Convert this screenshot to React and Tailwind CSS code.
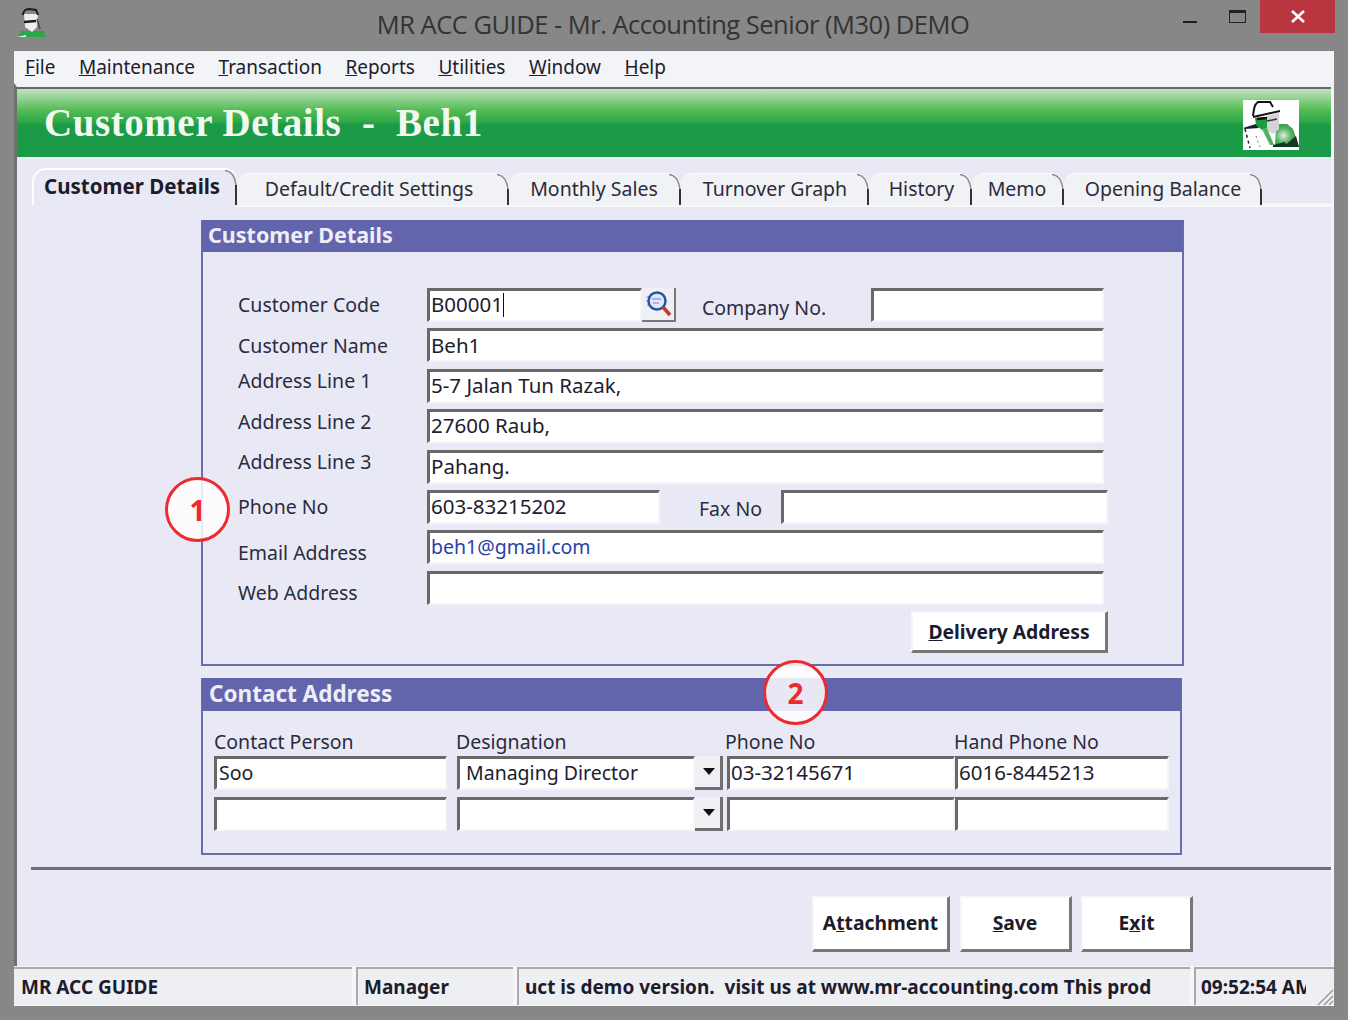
import React from 'react'

const bevel = 'border-t-[3px] border-l-[3px] border-r-2 border-b-2 border-t-[#686868] border-l-[#686868] border-r-[#f6f6fa] border-b-[#f6f6fa] bg-white'
const btn = 'flex items-center justify-center bg-white border-t-2 border-l-2 border-r-[3px] border-b-[3px] border-t-[#f6f6fa] border-l-[#f6f6fa] border-r-[#777] border-b-[#777] font-bold text-[19.3px] text-[#1c1c2c]'

const tabs = [
  { label: 'Default/Credit Settings', w: 'w-[272px]', pr: 'pr-[8px]' },
  { label: 'Monthly Sales', w: 'w-[172px]', pr: 'pr-[2px]' },
  { label: 'Turnover Graph', w: 'w-[188px]', pr: 'pr-0' },
  { label: 'History', w: 'w-[103px]', pr: 'pl-[2px]' },
  { label: 'Memo', w: 'w-[92px]', pr: 'pr-[2px]' },
  { label: 'Opening Balance', w: 'w-[198px]', pr: 'pr-0' },
]

const ManLogo = ({ className }) => (
  <svg viewBox="0 0 56 50" className={className}>
    <defs>
      <radialGradient id="body" cx="0.35" cy="0.5" r="0.7">
        <stop offset="0" stopColor="#e4ece4" />
        <stop offset="0.45" stopColor="#58b564" />
        <stop offset="1" stopColor="#0f7a33" />
      </radialGradient>
    </defs>
    <rect width="56" height="50" fill="#fff" />
    <path d="M33 24 L44 24 L50 29 L56 47 L32 47 Z" fill="url(#body)" />
    <path d="M40 47 L56 47 L53 36 L47 41 Z" fill="#143a22" />
    <path d="M23 16 L36 13 L36 29 L30 34 L24 30 Z" fill="#d4d4d4" />
    <path d="M0 28 L13 24 L16 28 L2 29 Z" fill="#123" />
    <path d="M12 18 L24 17 L24 28 L19 30 L13 25 Z" fill="#1f9a3e" />
    <path d="M19 29 L24 28 L31 45 L27 45 Z" fill="#4fb45e" />
    <path d="M10 16 C11 9 11 5 15 2 L27 2 L30 7" fill="none" stroke="#111" strokeWidth="2" />
    <path d="M10 17 L37 11" stroke="#111" strokeWidth="2" />
    <path d="M14 19 L24 18" stroke="#111" strokeWidth="2.5" />
    <path d="M24 21 L34 19" stroke="#333" strokeWidth="1.5" />
    <path d="M2 29 L7 48" stroke="#222" strokeWidth="1.5" strokeDasharray="3 3" fill="none" />
    <path d="M13 36 L17 47" stroke="#777" strokeWidth="1" strokeDasharray="2 3" fill="none" />
    <path d="M30 45 L42 42 L44 47 L30 47 Z" fill="#0c3a1c" />
  </svg>
)

const TitleIcon = ({ className }) => (
  <svg viewBox="0 0 44 38" className={className}>
    <path d="M8 32 L11 26 L34 26 L36 32 Z" fill="#2aa845" />
    <path d="M7 32 L16 30 L16 32 Z" fill="#eee" />
    <path d="M14 9 L28 9 L27 22 L22 27 L15 22 Z" fill="#eee" />
    <path d="M13 10 C13 6 16 4 19 4 L26 5 L28 10" fill="none" stroke="#1c1c1c" strokeWidth="2" />
    <path d="M14 17 L26 16" stroke="#1c1c1c" strokeWidth="2.5" />
    <path d="M27 14 L30 24" stroke="#444" strokeWidth="1.5" />
  </svg>
)

const Corner = () => (
  <svg className="absolute right-0 top-0" width="14" height="16" viewBox="0 0 14 16">
    <path d="M2 0.5 C8 1 12 6 13 16" fill="none" stroke="#8a8a8a" strokeWidth="1.5" />
  </svg>
)

const Input = ({ children, className = '', color = 'text-[#20202c]', size = 'text-[20.5px]' }) => (
  <div className={`${bevel} h-[34px] pl-[1px] pb-[2px] flex items-center ${size} ${color} whitespace-nowrap overflow-hidden ${className}`}>
    {children}
  </div>
)

const Row = ({ label, pad = '', children }) => (
  <div className="flex h-[34px] items-center">
    <div className={`w-[189px] shrink-0 text-[19.5px] text-[#2b2b40] ${pad}`}>{label}</div>
    {children}
  </div>
)

const Combo = ({ value }) => (
  <div className="flex w-[266px]">
    <Input className="w-[238px] pl-[6px]" size="text-[19.5px]">{value}</Input>
    <div className="w-[28px] h-[34px] pl-[2px] flex items-center justify-center bg-[#f0f0f4] border-r-[3px] border-b-[3px] border-r-[#6f6f6f] border-b-[#6f6f6f]">
      <svg width="12" height="7" viewBox="0 0 12 7"><path d="M0 0h12L6 7z" fill="#111" /></svg>
    </div>
  </div>
)

const Badge = ({ n, className }) => (
  <div className={`absolute w-[65px] h-[65px] rounded-full border-[3px] border-[#ed2a2e] flex items-center justify-center text-[#ed2a2e] font-bold text-[28px] bg-white/85 ${className}`}>
    {n}
  </div>
)

export default function App() {
  return (
    <div className="relative w-[1348px] h-[1020px] overflow-hidden bg-[#868786] flex flex-col font-['Noto_Sans',sans-serif]">
      {/* title bar */}
      <div className="relative h-[51px] shrink-0 flex items-center justify-center pb-[2px] pr-[2px]">
        <TitleIcon className="absolute left-[10px] top-[5px] w-[44px] h-[38px]" />
        <div className="text-[25.5px] text-[#333] font-['Open_Sans',sans-serif] tracking-[-0.5px]">MR ACC GUIDE - Mr. Accounting Senior (M30) DEMO</div>
        <div className="absolute right-[13px] top-0 flex items-start">
          <div className="w-[14px] h-[2px] bg-[#1a1a2a] mt-[21px] mr-[32px]"></div>
          <div className="w-[17px] h-[13px] border border-[#222] border-t-[3px] mt-[10px] mr-[14px]"></div>
          <div className="w-[75px] h-[33px] bg-[#b9353f] flex items-center justify-center">
            <svg width="16" height="13" viewBox="0 0 16 13"><path d="M2 1l12 11M14 1L2 12" stroke="#fff" strokeWidth="2.6" /></svg>
          </div>
        </div>
      </div>

      {/* menu */}
      <div className="ml-[14px] w-[1320px] h-[32px] shrink-0 bg-[#f3f4f8] flex items-center gap-[23.5px] pl-[11px] text-[19px] text-[#20202c]">
        <div><u>F</u>ile</div>
        <div><u>M</u>aintenance</div>
        <div><u>T</u>ransaction</div>
        <div><u>R</u>eports</div>
        <div><u>U</u>tilities</div>
        <div><u>W</u>indow</div>
        <div><u>H</u>elp</div>
      </div>

      {/* window body */}
      <div className="ml-[14px] w-[1320px] h-[884px] shrink-0 bg-[#e9e9f5] border-l-[3px] border-l-[#6f7070] border-r-[3px] border-r-[#f3f4f8] border-t-[4px] border-t-[#f1f2f5] flex flex-col">
        <div className="h-[70px] shrink-0 border-t-2 border-t-[#666] bg-[linear-gradient(#c3e3c0_0%,#57bd58_30%,#2aa545_50%,#1b9a48_52%,#1b9a48_100%)] flex items-center justify-between pl-[27px] pr-[32px]">
          <div className="text-[39px] font-bold text-[#f3f8ee] font-['Liberation_Serif',serif] whitespace-pre tracking-[0.55px]">Customer Details  -  Beh1</div>
          <div className="pt-[4px]"><ManLogo className="w-[56px] h-[50px]" /></div>
        </div>

        {/* tabs */}
        <div className="mt-[11px] h-[37px] shrink-0 flex items-end pl-[15px] text-[19.5px] text-[#2b2b3b]">
          <div className="relative w-[205px] h-[37px] pl-[10px] pb-[2px] flex items-center text-[20.5px] rounded-tl-[14px] rounded-tr-[12px] border-t-2 border-l-2 border-white font-bold text-[#1c1c2c] whitespace-nowrap">
            Customer Details
            <Corner />
            <span className="absolute right-0 bottom-0 w-[2px] h-[20px] bg-[#333]"></span>
          </div>
          {tabs.map((t) => (
            <div key={t.label} className={`relative ${t.w} ${t.pr} h-[32px] pb-[2px] flex items-center justify-center rounded-tl-[12px] rounded-tr-[14px] bg-[#f1f2f6] border-t border-t-white whitespace-nowrap`}>
              {t.label}
              <Corner />
              <span className="absolute right-0 bottom-0 w-[2px] h-[16px] bg-[#333]"></span>
            </div>
          ))}
          <div className="flex-1 h-[2px] bg-[#f8f8fc]"></div>
        </div>
        <div className="ml-[218px] h-[2px] shrink-0 bg-[#f8f8fc]"></div>

        {/* customer details */}
        <div className="ml-[184px] mt-[13px] w-[983px] h-[446px] shrink-0 border-2 border-[#6b6cb0] border-t-0 flex flex-col">
          <div className="h-[32px] shrink-0 -mx-[1px] bg-[#6264ac] pl-[6px] pb-[2px] flex items-center text-[21.5px] font-bold text-[#eeeef6]">Customer Details</div>
          <div className="pl-[35px] pt-[36px] flex flex-col gap-[6.4px]">
            <Row label="Customer Code">
              <Input className="w-[215px]">B00001<span className="inline-block w-[1px] h-[24px] bg-[#111]"></span></Input>
              <div className="w-[34px] h-[34px] flex items-center justify-center bg-[#eef0f4] border-r-2 border-b-2 border-r-[#777] border-b-[#777]">
                <svg width="30" height="30" viewBox="0 0 30 30">
                  <path d="M3 8h8M3 12h6M4 16h6" stroke="#c9a8df" strokeWidth="1.5" />
                  <circle cx="14" cy="12" r="8.5" fill="#dbeaf8" stroke="#2456a8" strokeWidth="2.5" />
                  <path d="M9 10h9M10 14h6" stroke="#b994d8" strokeWidth="1.5" />
                  <path d="M20 18l7 8" stroke="#c23a2c" strokeWidth="3.5" />
                </svg>
              </div>
              <div className="w-[195px] pl-[26px] pt-[6px] text-[19.5px] text-[#2b2b40]">Company No.</div>
              <Input className="w-[233px]"></Input>
            </Row>
            <Row label="Customer Name"><Input className="w-[677px]">Beh1</Input></Row>
            <Row label="Address Line 1" pad="pb-[10px]"><Input className="w-[677px]">5-7 Jalan Tun Razak,</Input></Row>
            <Row label="Address Line 2" pad="pb-[10px]"><Input className="w-[677px]">27600 Raub,</Input></Row>
            <Row label="Address Line 3" pad="pb-[10px]"><Input className="w-[677px]">Pahang.</Input></Row>
            <Row label="Phone No">
              <Input className="w-[233px]">603-83215202</Input>
              <div className="w-[121px] pl-[39px] pt-[4px] text-[19.5px] text-[#2b2b40]">Fax No</div>
              <Input className="w-[327px]"></Input>
            </Row>
            <Row label="Email Address" pad="pt-[10px]"><Input className="w-[677px]" color="text-[#2a3fa8]" size="text-[19.5px]">beh1@gmail.com</Input></Row>
            <Row label="Web Address" pad="pt-[10px]"><Input className="w-[677px]"></Input></Row>
          </div>
          <div className="flex justify-end pr-[74px] mt-[6px]">
            <div className={`${btn} w-[197px] h-[42px] pt-[2px]`}><span><u>D</u>elivery Address</span></div>
          </div>
        </div>

        {/* contact address */}
        <div className="ml-[184px] mt-[12px] w-[981px] h-[177px] shrink-0 border-2 border-[#6b6cb0] border-t-0 flex flex-col">
          <div className="h-[33px] shrink-0 -mx-[1px] bg-[#6264ac] pl-[7px] pb-[2px] flex items-center text-[22.5px] font-bold text-[#eeeef6]">Contact Address</div>
          <div className="pl-[11px] pt-[16px] grid grid-cols-[243px_270px_228px_214px] text-[19.5px] text-[#2b2b40]">
            <div className="h-[29px]">Contact Person</div>
            <div className="h-[29px] -ml-[1px]">Designation</div>
            <div className="h-[29px] -ml-[2px]">Phone No</div>
            <div className="h-[29px] -ml-[1px]">Hand Phone No</div>
            <Input className="w-[233px] pl-[2px]" size="text-[19.5px]">Soo</Input>
            <Combo value="Managing Director" />
            <Input>03-32145671</Input>
            <Input>6016-8445213</Input>
            <Input className="w-[233px] mt-[7px]"></Input>
            <div className="mt-[7px]"><Combo /></div>
            <Input className="mt-[7px]"></Input>
            <Input className="mt-[7px]"></Input>
          </div>
        </div>

        <div className="ml-[14px] mt-[12px] h-[3px] shrink-0 bg-[#6f6f78]"></div>

        <div className="mt-[26px] flex justify-end gap-[9.5px] pr-[138px]">
          <div className={`${btn} w-[138px] h-[56px]`}><span>A<u>t</u>tachment</span></div>
          <div className={`${btn} w-[112px] h-[56px]`}><span><u>S</u>ave</span></div>
          <div className={`${btn} w-[112px] h-[56px]`}><span>E<u>x</u>it</span></div>
        </div>
      </div>

      {/* status bar */}
      <div className="relative ml-[14px] w-[1320px] h-[40px] shrink-0 -mt-[1px] flex gap-[4px] bg-[#f6f6fa] py-[1px] text-[19px] font-bold text-[#1c1c2c] whitespace-nowrap">
        <div className="w-[338px] bg-[#eeeff2] border-t-2 border-t-[#aaa] pl-[7px] flex items-center">MR ACC GUIDE</div>
        <div className="w-[157px] bg-[#eeeff2] border-t-2 border-l-2 border-[#aaa] pl-[6px] flex items-center">Manager</div>
        <div className="w-[673px] bg-[#eeeff2] border-t-2 border-l-2 border-[#aaa] pl-[6px] flex items-center whitespace-pre overflow-hidden">uct is demo version.  visit us at www.mr-accounting.com This prod</div>
        <div className="w-[140px] bg-[#eeeff2] border-t-2 border-l-2 border-[#aaa] pl-[5px] flex items-center">
          <div className="w-[105px] overflow-hidden">09:52:54 AM</div>
        </div>
        <svg className="absolute right-0 bottom-0" width="20" height="20" viewBox="0 0 20 20">
          <path d="M19 4L4 19M19 10L10 19M19 15L15 19" stroke="#9a9a9a" strokeWidth="1.5" />
        </svg>
      </div>

      <Badge n="1" className="left-[165px] top-[477px]" />
      <Badge n="2" className="left-[763px] top-[660px]" />
    </div>
  )
}
